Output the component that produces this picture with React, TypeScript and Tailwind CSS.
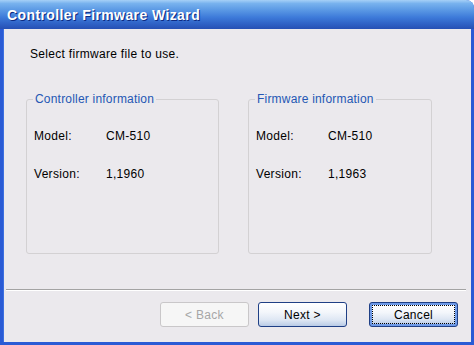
import React from "react";

const FONT = "font-['Liberation_Sans',Arial,sans-serif]";

interface InfoBoxProps {
  title: string;
  model: string;
  version: string;
  width: string;
}

function InfoBox({ title, model, version, width }: InfoBoxProps) {
  return (
    <div className={`relative h-[155px] ${width} border border-[#d3d1d3] rounded-[3px] pl-[7px] pt-[29px]`}>
      {/* group caption sits over the top border */}
      <span className="absolute left-[6px] -top-[8px] px-[2px] bg-[#ebe9ed] text-[12px] leading-[14px] tracking-[0.2px] text-[#2457b4]">
        {title}
      </span>
      <div className="flex flex-col gap-[24px] text-[12px] leading-[14px] tracking-[0.3px] text-black">
        <div className="flex">
          <span className="w-[72px]">Model:</span>
          <span>{model}</span>
        </div>
        <div className="flex">
          <span className="w-[72px]">Version:</span>
          <span>{version}</span>
        </div>
      </div>
    </div>
  );
}

export default function App() {
  return (
    <div className={`w-[474px] h-[345px] flex flex-col bg-[#2a5bd5] rounded-tr-[8px] ${FONT}`}>
      {/* Title bar */}
      <div className="h-[29px] shrink-0 flex items-center pl-[7px] rounded-tr-[8px] bg-[linear-gradient(to_bottom,#a6d0f7_0%,#78b2ee_12%,#5a98e4_35%,#3d7ad9_60%,#2f62c6_82%,#2650b4_100%)]">
        <span className="text-[14px] font-bold text-white leading-none tracking-[0.4px] [text-shadow:1px_1px_0_#0c2a82]">
          Controller Firmware Wizard
        </span>
      </div>

      {/* Body */}
      <div className="flex-1 mx-[3px] mb-[3px] bg-[#ebe9ed] flex flex-col border-l border-[#3c6fe0]">
        <p className="ml-[26px] mt-[18px] text-[12px] leading-[14px] tracking-[0.3px] text-black">
          Select firmware file to use.
        </p>

        <div className="flex gap-[29px] ml-[22px] mt-[38px]">
          <InfoBox title="Controller information" model="CM-510" version="1,1960" width="w-[193px]" />
          <InfoBox title="Firmware information" model="CM-510" version="1,1963" width="w-[184px]" />
        </div>

        <div className="mt-[35px] ml-[2px] mr-[5px] border-t border-b border-t-[#a3a3a3] border-b-white" />

        {/* Buttons */}
        <div className="flex justify-end mt-[11px] mr-[13px] text-[12px] leading-[14px] tracking-[0.3px]">
          <button className="w-[89px] h-[25px] rounded-[3px] border border-[#c9c7c9] bg-[#f6f6f6] text-[#a6a6a6]">
            &lt; Back
          </button>
          <button className="ml-[9px] w-[89px] h-[25px] rounded-[3px] border border-[#1f3f85] text-black bg-[linear-gradient(to_bottom,#ffffff_0%,#f3f6fb_40%,#dde6f3_75%,#b9cbe6_100%)]">
            Next &gt;
          </button>
          <button className="ml-[22px] w-[89px] h-[25px] rounded-[3px] border border-[#1f3f85] p-[2px] bg-[#6f9be8]">
            <div className="w-full h-full flex items-center justify-center outline outline-1 outline-dotted outline-black -outline-offset-1 text-black bg-[linear-gradient(to_bottom,#ffffff_0%,#f3f6fb_40%,#dde6f3_75%,#bccde7_100%)]">
              Cancel
            </div>
          </button>
        </div>
      </div>
    </div>
  );
}
